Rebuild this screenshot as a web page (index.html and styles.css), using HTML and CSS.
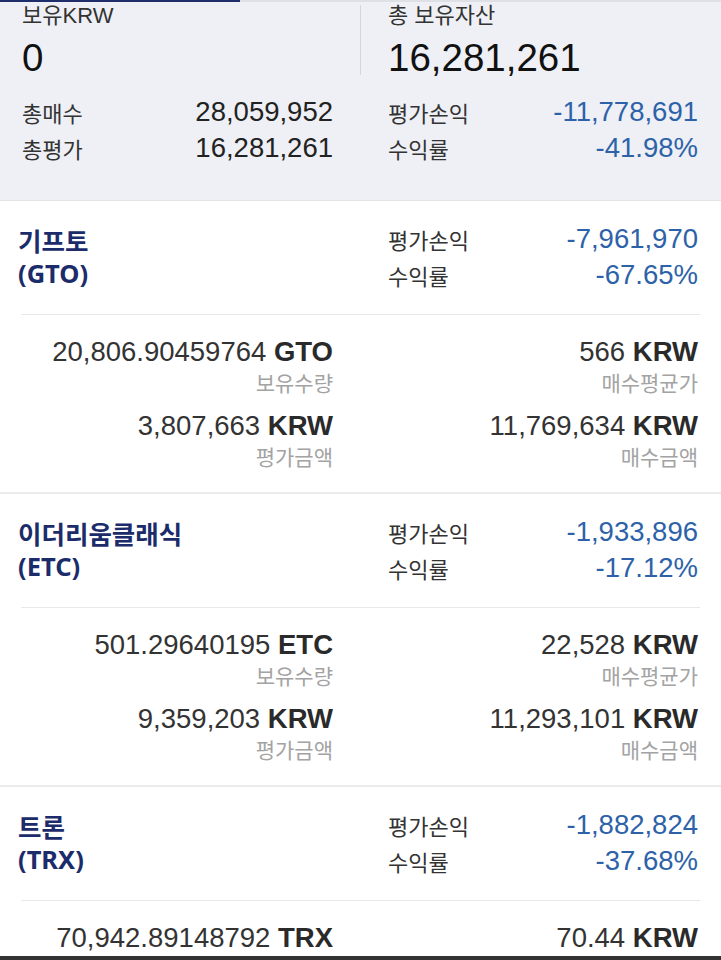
FILE: index.html
```html
<!DOCTYPE html>
<html lang="ko">
<head>
    <meta charset="UTF-8">
    <meta name="viewport" content="width=device-width, initial-scale=1.0">
    <title>보유자산</title>
    <link rel="stylesheet" href="styles.css">
</head>
<body>
    <div class="tabline"><div class="tab-active"></div></div>

    <div class="summary">
        <div class="sum-col">
            <div class="sum-label">보유KRW</div>
            <div class="sum-big">0</div>
            <div class="sum-row"><span>총매수</span><span class="num">28,059,952</span></div>
            <div class="sum-row"><span>총평가</span><span class="num">16,281,261</span></div>
        </div>
        <div class="sum-divider"></div>
        <div class="sum-col">
            <div class="sum-label">총 보유자산</div>
            <div class="sum-big">16,281,261</div>
            <div class="sum-row"><span>평가손익</span><span class="num blue">-11,778,691</span></div>
            <div class="sum-row"><span>수익률</span><span class="num blue">-41.98%</span></div>
        </div>
    </div>

    <div class="coin">
        <div class="coin-head">
            <div class="coin-name">기프토<br>(GTO)</div>
            <div class="coin-stats">
                <div class="stat-row"><span>평가손익</span><span class="num blue">-7,961,970</span></div>
                <div class="stat-row"><span>수익률</span><span class="num blue">-67.65%</span></div>
            </div>
        </div>
        <div class="coin-line"></div>
        <div class="coin-detail">
            <div class="cell"><div class="num">20,806.90459764 <b>GTO</b></div><div class="cap">보유수량</div></div>
            <div class="cell"><div class="num">566 <b>KRW</b></div><div class="cap">매수평균가</div></div>
            <div class="cell"><div class="num">3,807,663 <b>KRW</b></div><div class="cap">평가금액</div></div>
            <div class="cell"><div class="num">11,769,634 <b>KRW</b></div><div class="cap">매수금액</div></div>
        </div>
    </div>

    <div class="coin">
        <div class="coin-head">
            <div class="coin-name">이더리움클래식<br>(ETC)</div>
            <div class="coin-stats">
                <div class="stat-row"><span>평가손익</span><span class="num blue">-1,933,896</span></div>
                <div class="stat-row"><span>수익률</span><span class="num blue">-17.12%</span></div>
            </div>
        </div>
        <div class="coin-line"></div>
        <div class="coin-detail">
            <div class="cell"><div class="num">501.29640195 <b>ETC</b></div><div class="cap">보유수량</div></div>
            <div class="cell"><div class="num">22,528 <b>KRW</b></div><div class="cap">매수평균가</div></div>
            <div class="cell"><div class="num">9,359,203 <b>KRW</b></div><div class="cap">평가금액</div></div>
            <div class="cell"><div class="num">11,293,101 <b>KRW</b></div><div class="cap">매수금액</div></div>
        </div>
    </div>

    <div class="coin">
        <div class="coin-head">
            <div class="coin-name">트론<br>(TRX)</div>
            <div class="coin-stats">
                <div class="stat-row"><span>평가손익</span><span class="num blue">-1,882,824</span></div>
                <div class="stat-row"><span>수익률</span><span class="num blue">-37.68%</span></div>
            </div>
        </div>
        <div class="coin-line"></div>
        <div class="coin-detail">
            <div class="cell"><div class="num">70,942.89148792 <b>TRX</b></div></div>
            <div class="cell"><div class="num">70.44 <b>KRW</b></div></div>
        </div>
    </div>

    <div class="home-bar"></div>
</body>
</html>
```

FILE: styles.css
```css
body {
    margin: 0;
    padding: 0;
    background-color: #fff;
    font-family: "Liberation Sans", "Noto Sans CJK KR", sans-serif;
    color: #222;
}

.tabline {
    height: 2px;
    background-color: #dfe0e5;
}

.tab-active {
    width: 240px;
    height: 2px;
    background-color: #1d2e6b;
}

/* summary panel */
.summary {
    display: grid;
    grid-template-columns: 311px 1px 1fr;
    column-gap: 27px;
    padding: 0 23px 34px 22px;
    background-color: #eef0f5;
    border-bottom: 1px solid #e3e4e8;
}

.sum-divider {
    height: 70px;
    margin-top: 3px;
    background-color: #d4d6dc;
}

.sum-label {
    font-size: 22px;
    line-height: 28px;
    color: #333;
}

.sum-big {
    font-size: 38.5px;
    line-height: 56px;
    color: #111;
    margin-bottom: 8px;
}

.sum-row {
    display: flex;
    justify-content: space-between;
    align-items: center;
    height: 36px;
    font-size: 22px;
    color: #333;
}

.num {
    font-size: 27.5px;
    color: #222;
}

.blue {
    color: #2d62a9;
}

/* coin sections */
.coin {
    border-bottom: 2px solid #ebebeb;
}

.coin-head {
    display: grid;
    grid-template-columns: 315px 1fr;
    column-gap: 55px;
    align-items: center;
    padding: 20px 23px 21px 18px;
}

.coin-name {
    font-family: "Noto Sans", "Noto Sans CJK KR", sans-serif;
    font-weight: bold;
    font-size: 25.5px;
    line-height: 32px;
    color: #1c2c6a;
}

.stat-row {
    display: flex;
    justify-content: space-between;
    align-items: center;
    height: 36px;
    font-size: 22px;
    color: #333;
}

.coin-line {
    height: 1px;
    margin: 0 21px;
    background-color: #e8e8e8;
}

.coin-detail {
    display: grid;
    grid-template-columns: 311px 1fr;
    column-gap: 55px;
    row-gap: 10px;
    padding: 19px 23px 20px 22px;
}

.cell {
    text-align: right;
}

.cell .num {
    line-height: 36px;
    color: #333;
}

.cell b {
    color: #2a2a2a;
}

.cap {
    font-size: 21px;
    line-height: 28px;
    color: #a3a3a3;
}

.home-bar {
    position: fixed;
    left: 0;
    right: 0;
    bottom: 0;
    height: 4px;
    background-color: #333;
}
```
